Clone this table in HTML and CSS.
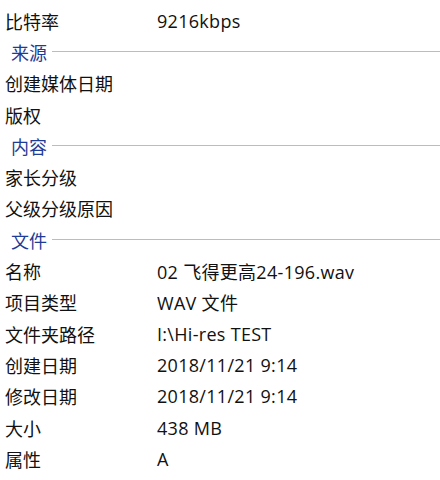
FILE: index.html
```html
<!DOCTYPE html>
<html lang="zh-CN">
<head>
    <meta charset="UTF-8">
    <title>属性 - 详细信息</title>
    <link rel="stylesheet" href="styles.css">
</head>
<body>
    <div class="details">
        <div class="row"><span class="label">比特率</span><span class="value">9216kbps</span></div>

        <div class="group"><span class="group-title">来源</span><span class="rule"></span></div>
        <div class="row"><span class="label">创建媒体日期</span><span class="value"></span></div>
        <div class="row"><span class="label">版权</span><span class="value"></span></div>

        <div class="group"><span class="group-title">内容</span><span class="rule"></span></div>
        <div class="row"><span class="label">家长分级</span><span class="value"></span></div>
        <div class="row"><span class="label">父级分级原因</span><span class="value"></span></div>

        <div class="group"><span class="group-title">文件</span><span class="rule"></span></div>
        <div class="row"><span class="label">名称</span><span class="value">02 飞得更高24-196.wav</span></div>
        <div class="row"><span class="label">项目类型</span><span class="value">WAV 文件</span></div>
        <div class="row"><span class="label">文件夹路径</span><span class="value">I:\Hi-res TEST</span></div>
        <div class="row"><span class="label">创建日期</span><span class="value">2018/11/21 9:14</span></div>
        <div class="row"><span class="label">修改日期</span><span class="value">2018/11/21 9:14</span></div>
        <div class="row"><span class="label">大小</span><span class="value">438 MB</span></div>
        <div class="row"><span class="label">属性</span><span class="value">A</span></div>
    </div>
</body>
</html>
```

FILE: styles.css
```css
:root {
    --text: #111111;
    --group-blue: #1e3c96;
    --rule: #b4bcd2;
}

body {
    margin: 0;
    background: #ffffff;
    color: var(--text);
    font-family: "Open Sans", "Noto Sans CJK SC", sans-serif;
    font-size: 18px;
}

.details {
    display: flex;
    flex-direction: column;
    padding-top: 5px;
}

.row {
    display: flex;
    align-items: center;
    height: 31.3px;
    padding-left: 5px;
}

.label {
    width: 152px;
    flex-shrink: 0;
    white-space: nowrap;
}

.value {
    white-space: nowrap;
    letter-spacing: 0.3px;
}

.group {
    display: flex;
    align-items: center;
    height: 31.3px;
    padding-left: 11px;
}

.group-title {
    color: var(--group-blue);
    margin-right: 5px;
}

.rule {
    flex-grow: 1;
    height: 1px;
    background: var(--rule);
}
```
